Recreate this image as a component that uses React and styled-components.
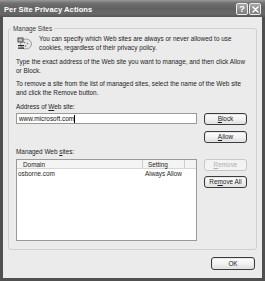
import React from "react";
import styled, { createGlobalStyle } from "styled-components";

const FONT = `"Liberation Sans", Arial, sans-serif`;

const GlobalStyle = createGlobalStyle`
  html, body { margin: 0; padding: 0; background: #4e4e4e; }
  body { width: 265px; height: 281px; overflow: hidden; }
  * { box-sizing: border-box; }
`;

const Window = styled.div`
  width: 265px;
  height: 281px;
  display: flex;
  flex-direction: column;
  background: #505050;
  font-family: ${FONT};
  font-size: 6.4px;
  line-height: 9px;
  color: #1e1e1e;
`;

const TitleBar = styled.div`
  height: 17px;
  flex: none;
  display: flex;
  align-items: center;
  padding: 1px 4px 0 4px;
  background: linear-gradient(#9a9a9a 0, #727272 3px, #626262 8px, #686868 14px, #555 17px);
`;

const Title = styled.div`
  flex: 1;
  color: #fff;
  font-weight: bold;
  font-size: 7.6px;
  letter-spacing: 0.05px;
`;

const CaptionButtons = styled.div`
  display: flex;
  gap: 1px;
`;

const CaptionButton = styled.div`
  width: 12px;
  height: 12px;
  border: 1px solid #eaeaea;
  border-radius: 2px;
  background: linear-gradient(#a8a8a8, #7c7c7c);
  display: flex;
  align-items: center;
  justify-content: center;
  color: #fff;
  font-weight: bold;
  font-size: 9px;
  line-height: 1;
`;

const Body = styled.div`
  flex: 1;
  margin: 0 3px 3px;
  background: #ebebeb;
  display: flex;
  flex-direction: column;
`;

const Group = styled.fieldset`
  margin: 7px 5px 0;
  padding: 0 7px 8px;
  border: 1px solid #cfcfcf;
  border-radius: 3px;
  min-width: 0;
`;

const Legend = styled.legend`
  margin-left: -5px;
  padding: 0 2px;
  color: #3a3a3a;
  line-height: 9px;
`;

const Intro = styled.div`
  display: flex;
  gap: 7px;
  margin-top: 1px;
`;

const IconBox = styled.div`
  width: 16px;
  flex: none;
  padding-top: 2px;
`;

const Para = styled.p`
  margin: ${(p) => p.$top || 0}px 0 0;
  line-height: 9px;
`;

const Label = styled.div`
  margin-top: ${(p) => p.$top || 0}px;
  line-height: 9px;
`;

const U = styled.span`
  text-decoration: underline;
  text-underline-offset: 1px;
`;

const Row = styled.div`
  display: flex;
  gap: 7px;
  margin-top: ${(p) => p.$top || 0}px;
  align-items: flex-start;
`;

const TextBox = styled.div`
  width: 181px;
  height: 11px;
  flex: none;
  background: #fff;
  border: 1px solid #9a9a9a;
  padding-left: 2px;
  display: flex;
  align-items: center;
  line-height: 8px;
  color: #111;
`;

const Caret = styled.span`
  display: inline-block;
  width: 1px;
  height: 8px;
  background: #000;
`;

const ButtonCol = styled.div`
  display: flex;
  flex-direction: column;
  gap: ${(p) => p.$gap || 6}px;
  width: 43px;
  flex: none;
`;

const Button = styled.div`
  width: ${(p) => p.$w || 43}px;
  height: ${(p) => p.$h || 12}px;
  border: 1px solid ${(p) => (p.$disabled ? "#c8c8c8" : "#3c3c3c")};
  border-radius: 3px;
  background: ${(p) =>
    p.$disabled ? "#f3f3f3" : "linear-gradient(#fdfdfd, #f0f0f0 60%, #dcdcdc)"};
  color: ${(p) => (p.$disabled ? "#b0b0b0" : "#1a1a1a")};
  display: flex;
  align-items: center;
  justify-content: center;
  line-height: 8px;
  box-shadow: ${(p) => (p.$disabled ? "none" : "inset 0 0 0 1px #e6e6e6")};
`;

const ListBox = styled.div`
  width: 181px;
  height: 82px;
  flex: none;
  background: #fff;
  border: 1px solid #9a9a9a;
  display: flex;
  flex-direction: column;
`;

const Header = styled.div`
  display: grid;
  grid-template-columns: 126px 42px 1fr;
  height: 9px;
  background: #f4f4f4;
  border-bottom: 1px solid #d6d6d6;
`;

const HeaderCell = styled.div`
  padding-left: ${(p) => p.$pad}px;
  line-height: 9px;
  border-right: ${(p) => (p.$sep ? "1px solid #cfcfcf" : "none")};
  margin: 0;
`;

const ListRow = styled.div`
  display: grid;
  grid-template-columns: 126px 1fr;
  height: 10px;
  line-height: 10px;
`;

const Cell = styled.div`
  padding-left: ${(p) => p.$pad}px;
  white-space: nowrap;
`;

const Footer = styled.div`
  display: flex;
  justify-content: flex-end;
  padding: 7px 7px 0 0;
`;

const SiteIcon = () => (
  <svg width="16" height="15" viewBox="0 0 16 15">
    <ellipse cx="10" cy="8" rx="5.5" ry="5" fill="#e6e6e6" stroke="#8a8a8a" strokeWidth="0.8" />
    <circle cx="8.5" cy="6.5" r="0.8" fill="#777" />
    <circle cx="11.5" cy="7.5" r="0.8" fill="#777" />
    <circle cx="9.5" cy="10" r="0.8" fill="#777" />
    <path d="M1.5 1.5 h6 v5 h-6 z" fill="#4a4a4a" />
    <path d="M2.5 2.5 h4 v3 h-4 z" fill="#bdbdbd" />
    <path d="M2 9 h6 v1.3 h-6 z M2 11.5 h6 v1.3 h-6 z" fill="#2a2a2a" />
  </svg>
);

const CloseGlyph = () => (
  <svg width="7" height="7" viewBox="0 0 7 7">
    <path d="M1 1 L6 6 M6 1 L1 6" stroke="#fff" strokeWidth="1.5" strokeLinecap="round" />
  </svg>
);

export default function App() {
  return (
    <>
      <GlobalStyle />
      <Window>
        <TitleBar>
          <Title>Per Site Privacy Actions</Title>
          <CaptionButtons>
            <CaptionButton>?</CaptionButton>
            <CaptionButton>
              <CloseGlyph />
            </CaptionButton>
          </CaptionButtons>
        </TitleBar>
        <Body>
          <Group>
            <Legend>Manage Sites</Legend>
            <Intro>
              <IconBox>
                <SiteIcon />
              </IconBox>
              <Para>
                You can specify which Web sites are always or never allowed to use
                cookies, regardless of their privacy policy.
              </Para>
            </Intro>
            <Para $top={4}>
              Type the exact address of the Web site you want to manage, and then click Allow
              or Block.
            </Para>
            <Para $top={4}>
              To remove a site from the list of managed sites, select the name of the Web site
              and click the Remove button.
            </Para>
            <Label $top={5}>
              Address of <U>W</U>eb site:
            </Label>
            <Row $top={2}>
              <TextBox>
                www.microsoft.com
                <Caret />
              </TextBox>
              <ButtonCol $gap={6}>
                <Button>
                  <U>B</U>lock
                </Button>
                <Button>
                  <U>A</U>llow
                </Button>
              </ButtonCol>
            </Row>
            <Label $top={4}>
              Managed Web <U>s</U>ites:
            </Label>
            <Row $top={3}>
              <ListBox>
                <Header>
                  <HeaderCell $pad={6} $sep>
                    Domain
                  </HeaderCell>
                  <HeaderCell $pad={5} $sep>
                    Setting
                  </HeaderCell>
                  <HeaderCell $pad={0} />
                </Header>
                <ListRow>
                  <Cell $pad={1}>osborne.com</Cell>
                  <Cell $pad={2}>Always Allow</Cell>
                </ListRow>
              </ListBox>
              <ButtonCol $gap={5}>
                <Button $disabled>
                  <U>R</U>emove
                </Button>
                <Button>
                  Re<U>m</U>ove All
                </Button>
              </ButtonCol>
            </Row>
          </Group>
          <Footer>
            <Button $w={44} $h={13}>
              OK
            </Button>
          </Footer>
        </Body>
      </Window>
    </>
  );
}
